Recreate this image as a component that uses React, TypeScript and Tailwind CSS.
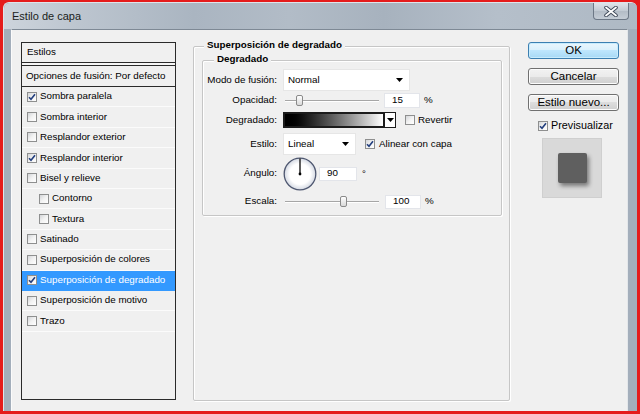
import React from "react";

const Check = ({ checked }: { checked?: boolean }) => (
  <span className="inline-flex w-[10px] h-[10px] shrink-0 items-center justify-center border border-[#8e8f8f] bg-gradient-to-br from-[#d4d6d9] via-[#f2f2f2] to-[#ffffff]">
    {checked && (
      <svg width="8" height="8" viewBox="0 0 8 8">
        <path d="M1 4.2 L3 6.3 L7 1.2" fill="none" stroke="#233f7e" strokeWidth="1.6" />
      </svg>
    )}
  </span>
);

const Arrow = () => (
  <svg width="7" height="4" viewBox="0 0 7 4">
    <path d="M0 0H7L3.5 4Z" fill="#000" />
  </svg>
);

const Slider = ({ pos }: { pos: number }) => (
  <div className="relative ml-[2px] w-[94px] h-[14px] shrink-0">
    <div className="absolute left-0 right-0 top-[6px] h-[1px] bg-[#a6a6a6]" />
    <div className="absolute left-0 right-0 top-[7px] h-[1px] bg-white" />
    <div
      className="absolute top-[1px] w-[7px] h-[11px] rounded-[2px] border border-[#8a8a8a] bg-gradient-to-b from-[#ffffff] to-[#d9d9d9]"
      style={{ left: pos - 3 }}
    />
  </div>
);

const items: { label: string; checked?: boolean; indent?: boolean; selected?: boolean }[] = [
  { label: "Sombra paralela", checked: true },
  { label: "Sombra interior" },
  { label: "Resplandor exterior" },
  { label: "Resplandor interior", checked: true },
  { label: "Bisel y relieve" },
  { label: "Contorno", indent: true },
  { label: "Textura", indent: true },
  { label: "Satinado" },
  { label: "Superposición de colores" },
  { label: "Superposición de degradado", checked: true, selected: true },
  { label: "Superposición de motivo" },
  { label: "Trazo" },
];

const Btn = ({ children, primary }: { children: React.ReactNode; primary?: boolean }) => (
  <div
    className={
      primary
        ? "h-[17px] w-[91px] flex items-center justify-center rounded-[3px] border border-[#3c7fb1] bg-[linear-gradient(#eaf6fd_0%,#d9f0fc_50%,#bee6fd_50%,#a7d9f5_100%)] shadow-[inset_0_0_0_1px_#c8ecfd] text-[11.5px] text-black"
        : "h-[17px] w-[91px] flex items-center justify-center rounded-[3px] border border-[#707070] bg-[linear-gradient(#f2f2f2_0%,#ebebeb_50%,#dddddd_50%,#cfcfcf_100%)] shadow-[inset_0_0_0_1px_#fcfcfc] text-[11.5px] text-black"
    }
  >
    {children}
  </div>
);

export default function App() {
  return (
    <div className="w-[640px] h-[414px] bg-[#e51c1c] pt-[2px] pl-[3px] pr-[3px] pb-[3px] font-['Liberation_Sans',Arial,sans-serif] text-black overflow-hidden">
      <div className="h-full rounded-t-[6px] bg-[#a3aebb] border-l border-t border-[#dfe4ea] flex flex-col">
        {/* title bar */}
        <div className="h-[26px] flex items-start pl-[8px] pr-[8px] rounded-t-[6px] bg-[linear-gradient(to_right,#cdd4dc_0%,#bcc5cf_12%,#aab5c1_30%,#b2bcc7_45%,#a7b2be_60%,#b5bfca_78%,#aeb9c4_100%)]">
          <span className="mt-[7px] text-[11px] leading-[13px] text-[#1b1d20]">Estilo de capa</span>
          <div className="ml-auto w-[36px] h-[17px] rounded-b-[4px] border border-t-0 border-[#6d7886] bg-[linear-gradient(#dfe4ea,#c2cad3_50%,#b3bcc6_51%,#c5cdd6)] flex items-center justify-center">
            <svg width="14" height="11" viewBox="0 0 14 11">
              <path d="M2 1.5 L12 9.5 M12 1.5 L2 9.5" stroke="#3d4757" strokeWidth="3.6" strokeLinecap="round" />
              <path d="M2 1.5 L12 9.5 M12 1.5 L2 9.5" stroke="#ffffff" strokeWidth="1.8" strokeLinecap="round" />
            </svg>
          </div>
        </div>
        {/* client */}
        <div className="flex-1 ml-[7px] mr-[9px] bg-[#f0f0f0] border-t border-t-[#7e8995] border-l border-l-[#fbfbfb] border-r border-r-[#e4e7ea] flex items-start pl-[9px] pt-[12px] text-[9.8px]">
          {/* styles list */}
          <div className="w-[155px] h-[358px] shrink-0 border border-[#2a2a2a] bg-[#f0f0f0] flex flex-col">
            <div className="h-[19px] flex items-center pl-[5px]">Estilos</div>
            <div className="h-[4px] border-y border-[#2a2a2a] bg-[#f6f6f6]" />
            <div className="h-[20px] flex items-center pl-[4px]">Opciones de fusión: Por defecto</div>
            <div className="h-[1px] bg-[#2a2a2a]" />
            {items.map((it) => (
              <div
                key={it.label}
                className={
                  (it.selected ? "bg-[#3399ff] text-white border-b-[#3399ff] " : "border-b-[#fbfbfb] ") +
                  "h-[20.4px] border-b flex items-center gap-[3px] " +
                  (it.indent ? "pl-[17px]" : "pl-[5px]")
                }
              >
                <Check checked={it.checked} />
                <span>{it.label}</span>
              </div>
            ))}
          </div>

          {/* group box */}
          <div className="relative ml-[17px] mt-[4px] w-[317px] h-[355px] shrink-0 rounded-[2px] border border-[#c6c6c6] shadow-[inset_1px_1px_0_#ffffff,1px_1px_0_#ffffff]">
            <span className="absolute left-[10px] -top-[8px] px-[3px] bg-[#f0f0f0] font-bold leading-[12px]">
              Superposición de degradado
            </span>
            <div className="relative ml-[8px] mt-[13px] w-[300px] h-[156px] rounded-[2px] border border-[#c6c6c6] shadow-[inset_1px_1px_0_#ffffff,1px_1px_0_#ffffff]">
              <span className="absolute left-[11px] -top-[8px] px-[3px] bg-[#f0f0f0] font-bold leading-[12px]">
                Degradado
              </span>

              {/* Modo de fusión */}
              <div className="mt-[8px] h-[22px] flex items-center">
                <span className="w-[74px] shrink-0 text-right">Modo de fusión:</span>
                <div className="ml-[6px] w-[127px] h-[22px] bg-white border border-[#e6e6e6] flex items-center pl-[4px] pr-[6px]">
                  <span>Normal</span>
                  <span className="ml-auto flex"><Arrow /></span>
                </div>
              </div>

              {/* Opacidad */}
              <div className="mt-[1px] h-[17px] flex items-center">
                <span className="w-[74px] shrink-0 text-right">Opacidad:</span>
                <div className="ml-[6px] flex items-center">
                  <Slider pos={14} />
                  <div className="ml-[5px] w-[36px] h-[15px] bg-white border border-[#e3e5ea] flex items-center pl-[7px]">15</div>
                  <span className="ml-[4px]">%</span>
                </div>
              </div>

              {/* Degradado */}
              <div className="mt-[2px] h-[18px] flex items-center">
                <span className="w-[74px] shrink-0 text-right">Degradado:</span>
                <div className="ml-[6px] flex items-center">
                  <div className="w-[102px] h-[16px] border-2 border-[#1c1c1c] bg-gradient-to-r from-[#000000] to-[#ffffff]" />
                  <div className="w-[11px] h-[16px] border border-l-0 border-[#1c1c1c] bg-white flex items-center justify-center">
                    <Arrow />
                  </div>
                  <span className="ml-[9px] flex"><Check /></span>
                  <span className="ml-[3px]">Revertir</span>
                </div>
              </div>

              {/* Estilo */}
              <div className="mt-[4px] h-[22px] flex items-center">
                <span className="w-[74px] shrink-0 text-right">Estilo:</span>
                <div className="ml-[6px] flex items-center">
                  <div className="w-[73px] h-[22px] bg-white border border-[#e6e6e6] flex items-center pl-[4px] pr-[6px]">
                    <span>Lineal</span>
                    <span className="ml-auto flex"><Arrow /></span>
                  </div>
                  <span className="ml-[9px] flex"><Check checked /></span>
                  <span className="ml-[4px]">Alinear con capa</span>
                </div>
              </div>

              {/* Ángulo */}
              <div className="mt-[2px] h-[33px] flex items-center">
                <span className="w-[74px] shrink-0 text-right">Ángulo:</span>
                <div className="ml-[6px] flex items-center">
                  <svg width="34" height="34" viewBox="0 0 34 34">
                    <defs>
                      <radialGradient id="dial" cx="50%" cy="50%" r="50%">
                        <stop offset="65%" stopColor="#ffffff" />
                        <stop offset="100%" stopColor="#d3d8e2" />
                      </radialGradient>
                    </defs>
                    <circle cx="17" cy="17" r="15.8" fill="url(#dial)" stroke="#4e5770" strokeWidth="1.3" />
                    <line x1="17" y1="17" x2="17" y2="1.5" stroke="#1a1a1a" strokeWidth="1.4" />
                    <circle cx="17" cy="17" r="1.4" fill="#000" />
                  </svg>
                  <div className="ml-[2px] w-[38px] h-[14px] bg-white border border-[#e3e5ea] flex items-center pl-[7px]">90</div>
                  <span className="ml-[5px] leading-[11px]">°</span>
                </div>
              </div>

              {/* Escala */}
              <div className="mt-[3px] h-[17px] flex items-center">
                <span className="w-[74px] shrink-0 text-right">Escala:</span>
                <div className="ml-[6px] flex items-center">
                  <Slider pos={58} />
                  <div className="ml-[6px] w-[36px] h-[14px] bg-white border border-[#e3e5ea] flex items-center pl-[7px]">100</div>
                  <span className="ml-[4px]">%</span>
                </div>
              </div>
            </div>
          </div>

          {/* buttons */}
          <div className="ml-[18px] w-[91px] shrink-0 flex flex-col">
            <Btn primary>OK</Btn>
            <div className="mt-[9px]"><Btn>Cancelar</Btn></div>
            <div className="mt-[9px]"><Btn>Estilo nuevo...</Btn></div>
            <div className="mt-[8px] h-[13px] flex items-center pl-[10px] gap-[3px]">
              <Check checked />
              <span className="text-[10.8px]">Previsualizar</span>
            </div>
            <div className="mt-[6px] ml-[14px] w-[60px] h-[60px] bg-[#d9d9d9] border border-[#cfcfcf] flex items-center justify-center">
              <div className="w-[29px] h-[30px] bg-[#5f5f5f] rounded-[2px] shadow-[2px_3px_4px_rgba(0,0,0,0.45)]" />
            </div>
          </div>
        </div>
      </div>
    </div>
  );
}
